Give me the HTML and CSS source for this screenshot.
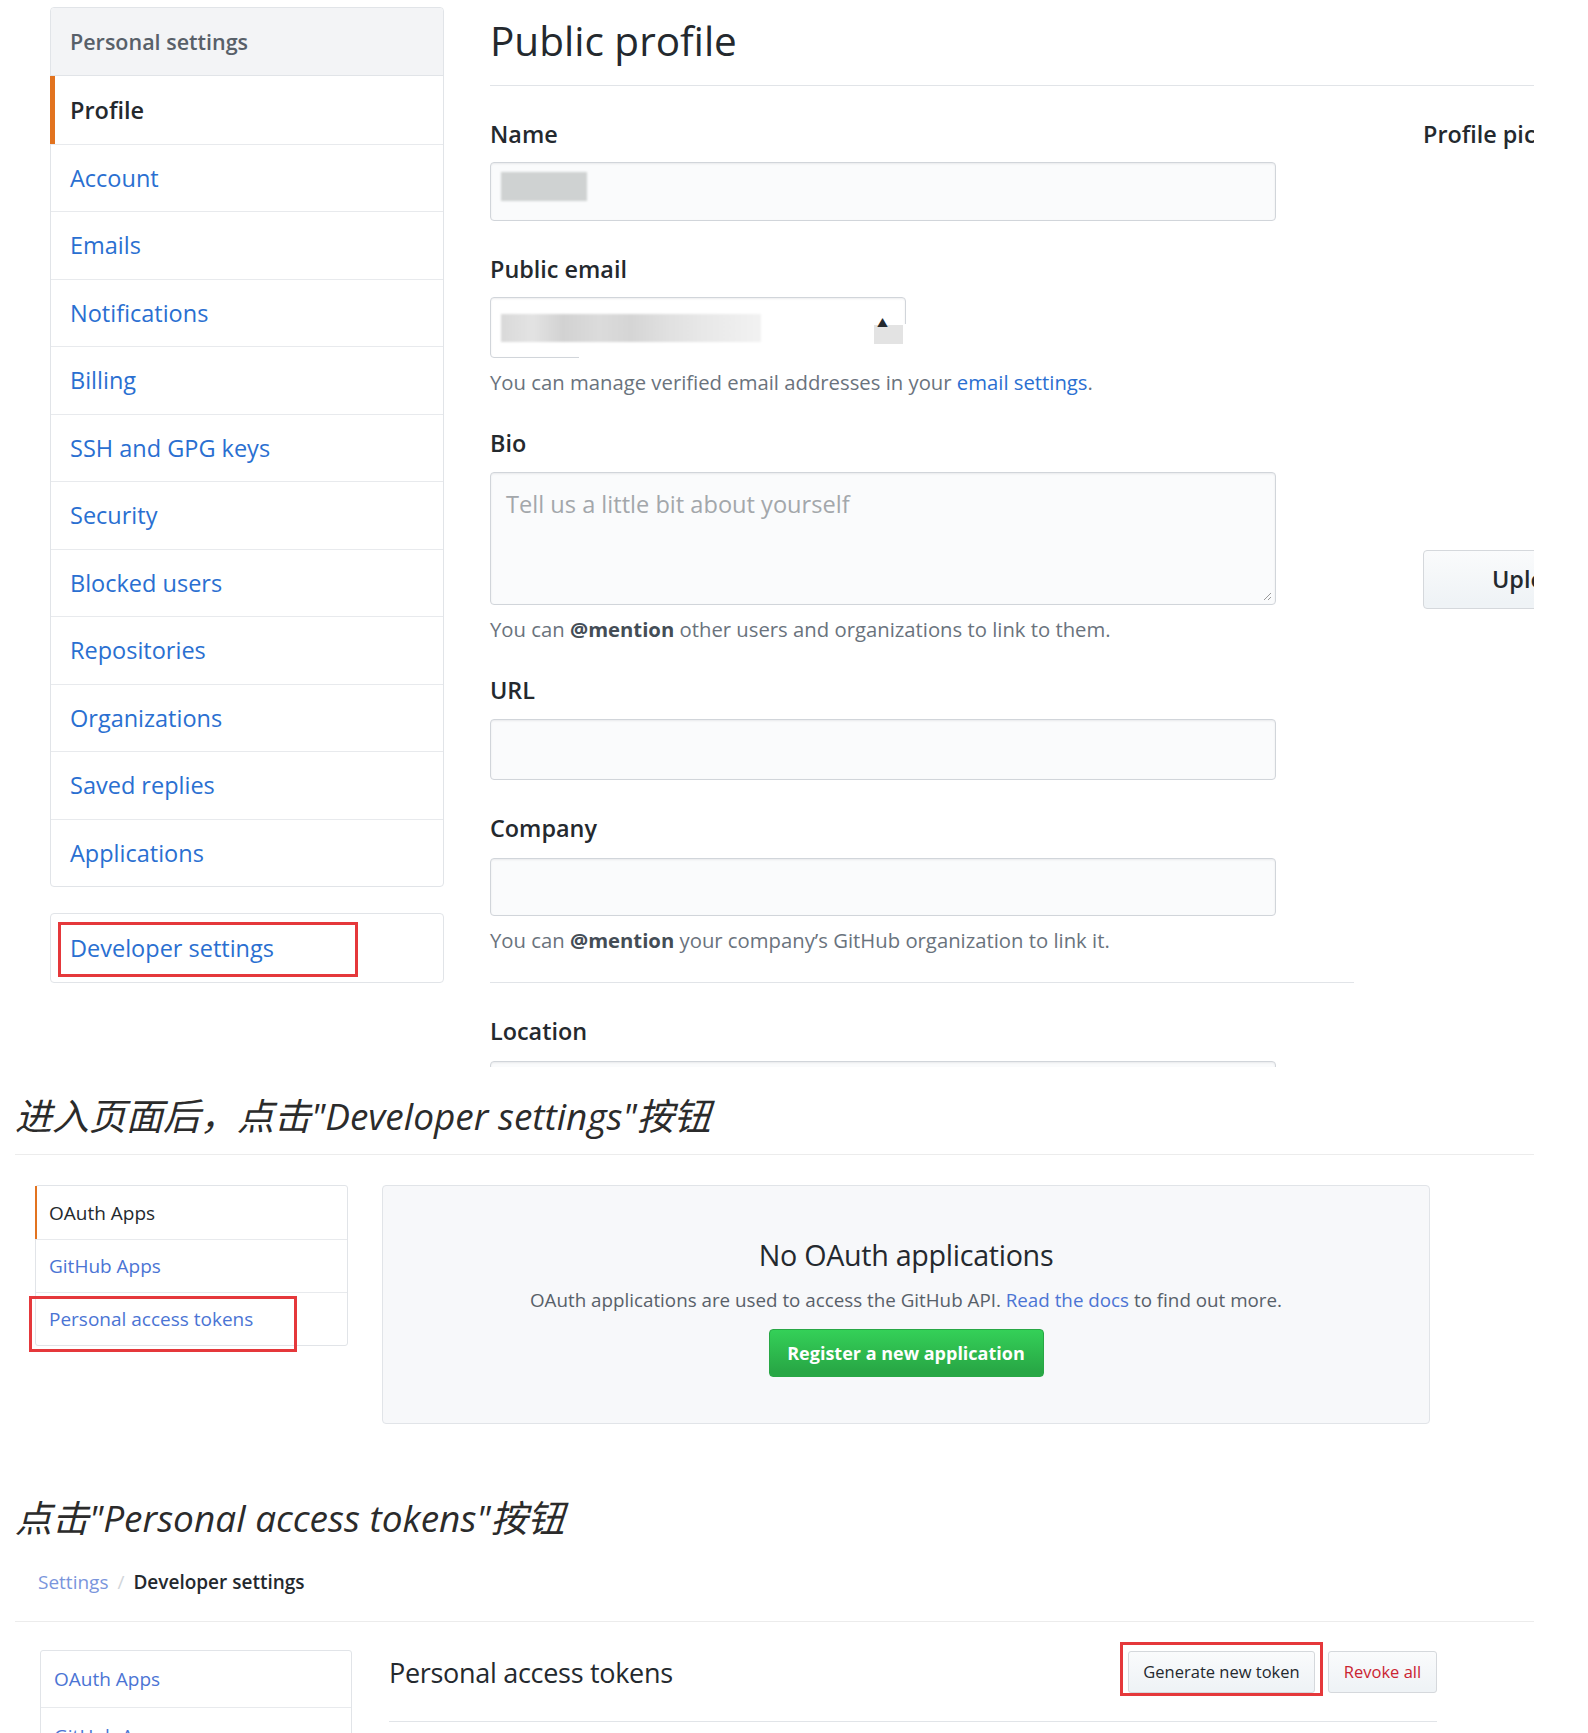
FILE: index.html
```html
<!DOCTYPE html>
<html lang="zh-CN">
<head>
<meta charset="utf-8">
<title>GitHub Personal access tokens</title>
<link rel="stylesheet" href="styles.css">
</head>
<body>
<div class="article">

  <div class="shot shot-profile">
    <div class="settings-nav">
      <nav class="menu">
        <div class="menu-heading">Personal settings</div>
        <a class="menu-item selected">Profile</a>
        <a class="menu-item">Account</a>
        <a class="menu-item">Emails</a>
        <a class="menu-item">Notifications</a>
        <a class="menu-item">Billing</a>
        <a class="menu-item">SSH and GPG keys</a>
        <a class="menu-item">Security</a>
        <a class="menu-item">Blocked users</a>
        <a class="menu-item">Repositories</a>
        <a class="menu-item">Organizations</a>
        <a class="menu-item">Saved replies</a>
        <a class="menu-item">Applications</a>
      </nav>
      <nav class="menu menu-dev">
        <a class="menu-item">Developer settings</a>
        <span class="annot annot-dev"></span>
      </nav>
    </div>

    <div class="profile-main">
      <h2 class="subhead">Public profile</h2>
      <div class="profile-body">
        <div class="profile-form">
          <div class="form-label">Name</div>
          <div class="input input-name"><span class="blur blur-name"></span></div>

          <div class="form-label">Public email</div>
          <div class="input input-select">
            <span class="blur blur-email"></span>
            <span class="select-patch"></span>
            <span class="select-arrow">▲</span>
            <span class="mask mask-bottom"></span>
            <span class="mask mask-right"></span>
          </div>
          <p class="note">You can manage verified email addresses in your <a class="link">email settings</a>.</p>

          <div class="form-label">Bio</div>
          <div class="input input-textarea">
            <span class="placeholder">Tell us a little bit about yourself</span>
            <svg class="resize" width="10" height="10" viewBox="0 0 10 10"><path d="M9 2 L2 9 M9 6 L6 9" stroke="#9a9a9a" stroke-width="1" fill="none"/></svg>
          </div>
          <p class="note">You can <b>@mention</b> other users and organizations to link to them.</p>

          <div class="form-label">URL</div>
          <div class="input input-url"></div>

          <div class="form-label">Company</div>
          <div class="input input-company"></div>
          <p class="note">You can <b>@mention</b> your company’s GitHub organization to link it.</p>

          <div class="form-rule"></div>

          <div class="form-label">Location</div>
          <div class="input input-location"></div>
        </div>

        <div class="profile-pic">
          <div class="form-label">Profile picture</div>
          <div class="btn btn-upload">Upload new picture</div>
        </div>
      </div>
    </div>
  </div>

  <h3 class="caption">进入页面后，点击"Developer settings"按钮</h3>
  <div class="rule rule-1"></div>

  <div class="shot shot-dev">
    <nav class="dev-menu">
      <a class="dev-item selected">OAuth Apps</a>
      <a class="dev-item">GitHub Apps</a>
      <a class="dev-item">Personal access tokens</a>
      <span class="annot annot-pat"></span>
    </nav>
    <div class="blankslate">
      <h3 class="blank-title">No OAuth applications</h3>
      <p class="blank-desc">OAuth applications are used to access the GitHub API. <a class="link">Read the docs</a> to find out more.</p>
      <span class="btn-primary">Register a new application</span>
    </div>
  </div>

  <h3 class="caption caption-2">点击"Personal access tokens"按钮</h3>
  <div class="breadcrumb">
    <a class="crumb-link">Settings</a><span class="crumb-sep">/</span><span class="crumb-current">Developer settings</span>
  </div>
  <div class="rule rule-2"></div>

  <div class="shot shot-tokens">
    <nav class="dev-menu dev-menu-2">
      <a class="dev-item tall">OAuth Apps</a>
      <a class="dev-item tall">GitHub Apps</a>
    </nav>
    <div class="tokens-main">
      <div class="tokens-head">
        <h2 class="tokens-title">Personal access tokens</h2>
        <div class="tokens-actions">
          <span class="btn-sm btn-generate">Generate new token<span class="annot annot-gen"></span></span>
          <span class="btn-sm btn-revoke">Revoke all</span>
        </div>
      </div>
    </div>
  </div>

</div>
</body>
</html>
```

FILE: styles.css
```css
* { box-sizing: border-box; }
html, body { margin: 0; padding: 0; background: #fff; }
body {
  width: 1588px;
  height: 1733px;
  overflow: hidden;
  font-family: "Open Sans", "Noto Sans", "Noto Sans CJK SC", sans-serif;
  color: #24292e;
}
a { text-decoration: none; }
p { margin: 0; }
h2, h3 { margin: 0; }

.article { margin-left: 15px; width: 1519px; }

/* ---------- screenshot 1 : profile ---------- */
.shot-profile {
  display: flex;
  height: 1067px;
  overflow: hidden;
  padding: 7px 0 0 35px;
}
.settings-nav { width: 394px; flex: none; }
.menu {
  border: 1px solid #e1e4e8;
  border-radius: 4px;
  background: #fff;
  position: relative;
}
.menu-heading {
  height: 68px;
  display: flex;
  align-items: center;
  padding-left: 19px;
  background: #f3f4f6;
  border-bottom: 1px solid #e1e4e8;
  border-radius: 4px 4px 0 0;
  font-size: 21.5px;
  font-weight: 600;
  color: #586069;
}
.menu-item {
  display: flex;
  align-items: center;
  height: 67.5px;
  padding-left: 19px;
  border-top: 1px solid #e8eaed;
  font-size: 23.5px;
  color: #2a6fd1;
  position: relative;
}
.menu-heading + .menu-item { border-top: 0; }
.menu-item.selected { color: #24292e; font-weight: 600; }
.menu-item.selected::before {
  content: "";
  position: absolute;
  left: -1px; top: 0; bottom: 0;
  width: 5px;
  background: #e2731f;
}
.menu-dev { margin-top: 26px; }
.menu-dev .menu-item { height: 68px; border-top: 0; }

.annot {
  position: absolute;
  border: 3px solid #e5383b;
  pointer-events: none;
}
.annot-dev { left: 7px; top: 8px; width: 300px; height: 55px; }

.profile-main { margin-left: 46px; flex: 1; min-width: 0; }
.subhead {
  font-size: 40.5px;
  font-weight: 400;
  line-height: 50px;
  padding: 9px 0 19px;
  border-bottom: 1px solid #e1e4e8;
  color: #24292e;
  white-space: nowrap;
}
.profile-body { display: flex; }
.profile-form { width: 786px; flex: none; }

.form-label {
  font-size: 23.4px;
  font-weight: 600;
  line-height: 30px;
  margin-top: 33px;
  white-space: nowrap;
}
.input {
  position: relative;
  margin-top: 13px;
  height: 59px;
  border: 1px solid #d1d5da;
  border-radius: 4px;
  background: #fafbfc;
  box-shadow: inset 0 1px 2px rgba(27, 31, 35, 0.075);
}
.input-select { width: 416px; height: 61px; background: #fff; }
.input-textarea { height: 133px; margin-top: 14px; }
.input-url { height: 61px; margin-top: 14px; }
.input-company { height: 58px; margin-top: 15px; }
.input-location { margin-top: 15px; height: 60px; }

.blur { position: absolute; filter: blur(1.2px); }
.blur-name { left: 10px; top: 9px; width: 86px; height: 29px; background: #cfd2d2; }
.blur-email {
  left: 10px; top: 16px; width: 260px; height: 28px;
  background: linear-gradient(90deg, #d9d9d9 0, #e3e3e3 12%, #d2d2d2 24%, #dbdbdb 38%, #d5d5d5 50%, #e0e0e0 64%, #e8e8e8 78%, #f2f2f2 100%);
}
.select-patch { position: absolute; left: 383px; top: 27px; width: 31px; height: 19px; background: #e3e3e3; }
.select-arrow {
  position: absolute; left: 386px; top: 18px;
  font-size: 11px; line-height: 14px; color: #24292e;
}
.mask { position: absolute; background: #fff; }
.mask-bottom { left: 88px; top: 46px; width: 340px; height: 16px; }
.mask-right { left: 412px; top: 26px; width: 6px; height: 36px; }

.placeholder {
  position: absolute; left: 15px; top: 16px;
  font-size: 23.6px; line-height: 30px; color: #a3a7ab;
  white-space: nowrap;
}
.resize { position: absolute; right: 3px; bottom: 3px; }

.note {
  font-size: 20.3px;
  line-height: 26px;
  margin-top: 11px;
  color: #6a737d;
  white-space: nowrap;
}
.note b { color: #444d56; font-weight: 700; }
.link { color: #2a6fd1; }
.form-rule { width: 864px; border-top: 1px solid #e1e4e8; margin-top: 29px; }

.profile-pic { margin-left: 147px; flex: none; white-space: nowrap; }
.btn-upload {
  margin-top: 401px;
  width: 320px;
  height: 59px;
  padding-left: 68px;
  line-height: 57px;
  font-size: 23.4px;
  font-weight: 600;
  color: #24292e;
  border: 1px solid #d5d8dc;
  border-radius: 4px;
  background: linear-gradient(180deg, #fafbfc 0%, #eff3f6 90%);
}

/* ---------- captions ---------- */
.caption {
  font-family: "Open Sans", "Noto Sans CJK SC", sans-serif;
  font-style: italic;
  font-weight: 400;
  font-size: 37px;
  line-height: 50px;
  margin-top: 24px;
  color: #2b2b2b;
  white-space: nowrap;
}
.rule { border-top: 1px solid #ececec; }
.rule-1 { margin-top: 13px; }

/* ---------- screenshot 2 : developer settings ---------- */
.shot-dev { display: flex; align-items: flex-start; padding-left: 20px; margin-top: 30px; }
.dev-menu {
  position: relative;
  width: 313px;
  flex: none;
  border: 1px solid #e1e4e8;
  border-radius: 3px;
  background: #fff;
}
.dev-item {
  display: flex;
  align-items: center;
  height: 53px;
  padding-left: 13px;
  border-top: 1px solid #e8eaed;
  font-size: 19px;
  color: #4b74d4;
  position: relative;
  white-space: nowrap;
}
.dev-item:first-child { border-top: 0; }
.dev-item.selected { color: #24292e; }
.dev-item.selected::before {
  content: "";
  position: absolute;
  left: -1px; top: 0; bottom: 0;
  width: 2px;
  background: #e2731f;
}
.annot-pat { left: -7px; top: 110px; width: 268px; height: 56px; }

.blankslate {
  margin-left: 34px;
  width: 1048px;
  height: 239px;
  background: #f7f8fa;
  border: 1px solid #e1e4e8;
  border-radius: 4px;
  text-align: center;
  padding-top: 51px;
}
.blank-title {
  font-size: 28.7px;
  font-weight: 400;
  line-height: 36px;
  color: #24292e;
  letter-spacing: -0.3px;
}
.blank-desc {
  margin-top: 14px;
  font-size: 18.8px;
  line-height: 26px;
  color: #586069;
  white-space: nowrap;
}
.blank-desc .link { color: #4b74d4; }
.btn-primary {
  display: inline-block;
  margin-top: 16px;
  width: 275px;
  height: 48px;
  line-height: 46px;
  font-size: 18px;
  font-weight: 700;
  color: #fff;
  border: 1px solid #28a745;
  border-radius: 4px;
  background: linear-gradient(180deg, #34d058 0%, #28a745 90%);
}

.caption-2 { margin-top: 69px; }
.breadcrumb {
  margin-top: 26px;
  padding-left: 23px;
  line-height: 26px;
  font-size: 19px;
  white-space: nowrap;
}
.crumb-link { color: #7a95dc; }
.crumb-sep { color: #d1d5da; margin: 0 9px; }
.crumb-current { color: #24292e; font-weight: 600; }
.rule-2 { margin-top: 26px; }

/* ---------- screenshot 3 : tokens ---------- */
.shot-tokens { display: flex; align-items: flex-start; padding-left: 25px; margin-top: 28px; }
.dev-menu-2 { width: 312px; }
.dev-item.tall { height: 56px; }
.tokens-main { margin-left: 37px; width: 1048px; flex: none; }
.tokens-head {
  display: flex;
  justify-content: space-between;
  align-items: flex-start;
  height: 72px;
  border-bottom: 1px solid #e1e4e8;
}
.tokens-title {
  font-size: 27px;
  font-weight: 400;
  line-height: 40px;
  margin-top: 3px;
  color: #24292e;
  letter-spacing: -0.3px;
}
.tokens-actions { display: flex; gap: 13px; margin-top: 1px; }
.btn-sm {
  position: relative;
  display: inline-block;
  height: 42px;
  line-height: 40px;
  font-size: 16.5px;
  text-align: center;
  white-space: nowrap;
  border: 1px solid #d5d8dc;
  border-radius: 3px;
  background: linear-gradient(180deg, #fafbfc 0%, #eff3f6 90%);
}
.btn-generate { width: 187px; color: #24292e; }
.btn-revoke { width: 109px; color: #cb2431; }
.annot-gen { left: -9px; top: -10px; width: 203px; height: 54px; }
```
